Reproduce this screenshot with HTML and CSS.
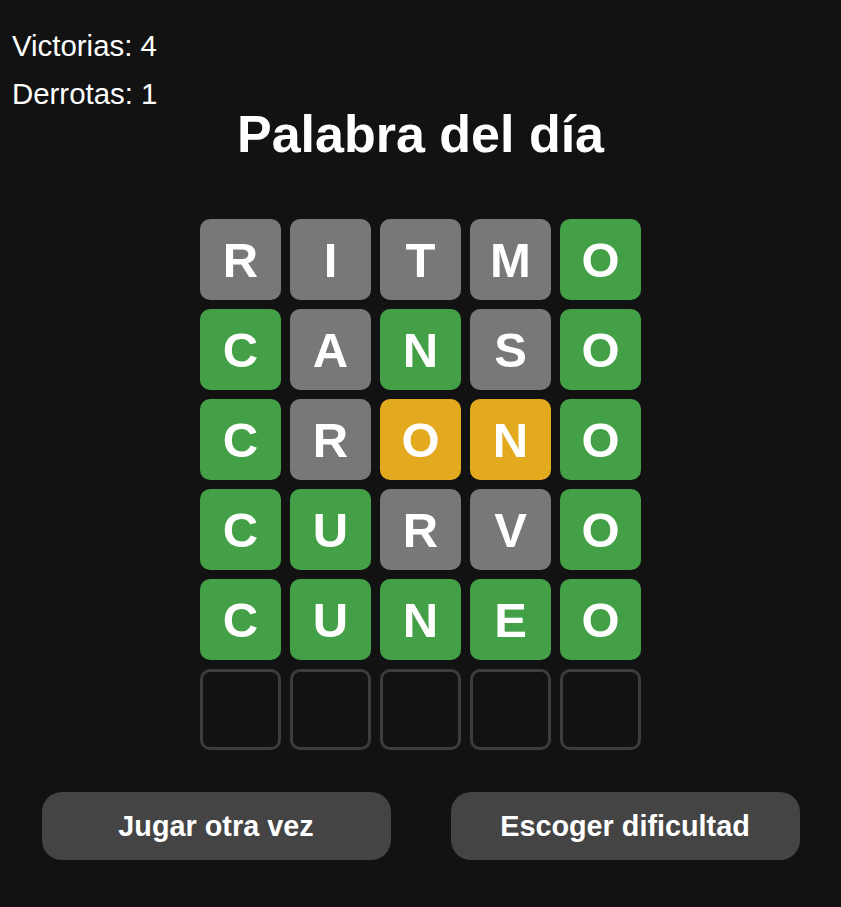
FILE: index.html
```html
<!DOCTYPE html>
<html lang="es">
<head>
<meta charset="utf-8">
<title>Palabra del día</title>
<link rel="stylesheet" href="styles.css">
</head>
<body>
<div class="stats">
  <div class="stat">Victorias: 4</div>
  <div class="stat">Derrotas: 1</div>
</div>
<main class="game">
  <h1 class="title">Palabra del día</h1>
  <div class="board">
    <div class="tile absent">R</div><div class="tile absent">I</div><div class="tile absent">T</div><div class="tile absent">M</div><div class="tile correct">O</div>
    <div class="tile correct">C</div><div class="tile absent">A</div><div class="tile correct">N</div><div class="tile absent">S</div><div class="tile correct">O</div>
    <div class="tile correct">C</div><div class="tile absent">R</div><div class="tile present">O</div><div class="tile present">N</div><div class="tile correct">O</div>
    <div class="tile correct">C</div><div class="tile correct">U</div><div class="tile absent">R</div><div class="tile absent">V</div><div class="tile correct">O</div>
    <div class="tile correct">C</div><div class="tile correct">U</div><div class="tile correct">N</div><div class="tile correct">E</div><div class="tile correct">O</div>
    <div class="tile empty"></div><div class="tile empty"></div><div class="tile empty"></div><div class="tile empty"></div><div class="tile empty"></div>
  </div>
  <div class="actions">
    <button class="btn">Jugar otra vez</button>
    <button class="btn">Escoger dificultad</button>
  </div>
</main>
</body>
</html>
```
FILE: styles.css
```css
html, body {
  margin: 0;
  padding: 0;
  background: #121212;
  color: #ffffff;
  font-family: "Liberation Sans", Arial, sans-serif;
}
body {
  position: relative;
  min-height: 907px;
}
.stats {
  position: absolute;
  left: 12px;
  top: 22px;
  font-size: 29.4px;
  line-height: 48px;
}
.game {
  display: flex;
  flex-direction: column;
  align-items: center;
  padding-top: 104px;
}
.title {
  margin: 0;
  font-size: 52px;
  font-weight: bold;
  line-height: normal;
}
.board {
  margin-top: 55px;
  display: grid;
  grid-template-columns: repeat(5, 81px);
  grid-auto-rows: 81px;
  gap: 9px;
}
.tile {
  box-sizing: border-box;
  border-radius: 10px;
  display: flex;
  align-items: center;
  justify-content: center;
  font-size: 49px;
  font-weight: bold;
  color: #ffffff;
}
.absent { background: #787878; }
.correct { background: #43a047; }
.present { background: #e3aa20; }
.empty {
  border: 3px solid #3c3c3c;
  background: transparent;
}
.actions {
  margin-top: 42px;
  display: flex;
  gap: 60px;
}
.btn {
  width: 349px;
  height: 68px;
  border: none;
  border-radius: 20px;
  background: #444444;
  color: #ffffff;
  font-family: "Liberation Sans", Arial, sans-serif;
  font-size: 28.8px;
  font-weight: bold;
  padding: 0;
}
```
